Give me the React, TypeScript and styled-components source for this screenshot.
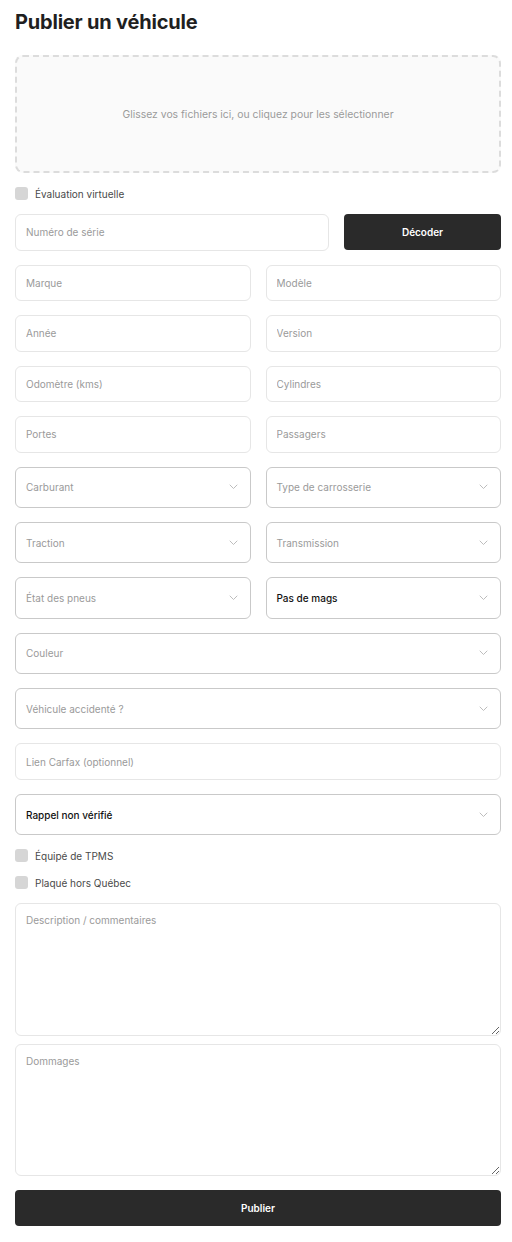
import * as React from "react"
import styled, { createGlobalStyle, css } from "styled-components"

const GlobalStyle = createGlobalStyle`
  html, body {
    margin: 0;
    padding: 0;
    background: #fff;
  }
  body {
    font-family: "Inter", "Liberation Sans", sans-serif;
    color: #1f1f1f;
  }
  * {
    box-sizing: border-box;
  }
`

const Page = styled.div`
  width: 512px;
  padding: 10px 11px 18px 15px;
  display: flex;
  flex-direction: column;
`

const Title = styled.h1`
  margin: 0 0 21px;
  font-size: 20px;
  line-height: 24px;
  font-weight: 700;
  letter-spacing: -0.2px;
  color: #1f1f1f;
`

const Form = styled.form`
  display: flex;
  flex-direction: column;
  gap: 14px;
`

const DropZone = styled.div`
  height: 118px;
  border: 2px dashed #dcdcdc;
  border-radius: 8px;
  background: #fafafa;
  display: flex;
  align-items: center;
  justify-content: center;
  font-size: 10.4px;
  color: #9a9a9a;
`

const CheckRow = styled.label`
  display: flex;
  align-items: center;
  gap: 7px;
  height: 13px;
  font-size: 10px;
  color: #4a4a4a;
`

const Box = styled.span`
  width: 13px;
  height: 13px;
  border-radius: 3px;
  background: #d6d6d6;
  flex: none;
`

const Row = styled.div<{ $cols?: string }>`
  display: grid;
  grid-template-columns: ${p => p.$cols || "1fr 1fr"};
  gap: 15px;
`

const field = css`
  width: 100%;
  border-radius: 6px;
  background: #fff;
  padding: 0 10px;
  font-family: "Inter", "Liberation Sans", sans-serif;
  font-size: 10px;
  outline: none;
`

const Input = styled.input`
  ${field};
  height: 36.5px;
  border: 1px solid #e6e6e6;
  color: #1f1f1f;
  &::placeholder {
    color: #9a9a9a;
  }
`

const SelectBox = styled.div<{ $filled?: boolean }>`
  ${field};
  height: 41.4px;
  border: 1px solid #c9c9c9;
  display: flex;
  align-items: center;
  justify-content: space-between;
  color: ${p => (p.$filled ? "#111" : "#9a9a9a")};
  font-weight: ${p => (p.$filled ? 500 : 400)};
  padding-right: 12px;
`

const TextAreas = styled.div`
  display: flex;
  flex-direction: column;
  gap: 8px;
`

const TextArea = styled.textarea`
  ${field};
  display: block;
  height: 132.5px;
  border: 1px solid #e6e6e6;
  padding: 10px 10px;
  resize: vertical;
  color: #1f1f1f;
  &::placeholder {
    color: #9a9a9a;
  }
`

const DarkButton = styled.button<{ $h?: number }>`
  height: ${p => p.$h || 36}px;
  border: 0;
  border-radius: 4px;
  background: #2a2a2a;
  color: #fff;
  font-family: "Inter", "Liberation Sans", sans-serif;
  font-size: 10px;
  font-weight: 600;
  cursor: pointer;
`

const Chevron = () => (
  <svg width="9" height="6" viewBox="0 0 9 6" fill="none">
    <path d="M1 1l3.5 3.5L8 1" stroke="#bdbdbd" strokeWidth="1" strokeLinecap="round" />
  </svg>
)

const Select = ({ label, filled }: { label: string; filled?: boolean }) => (
  <SelectBox $filled={filled}>
    <span>{label}</span>
    <Chevron />
  </SelectBox>
)

const Check = ({ label }: { label: string }) => (
  <CheckRow>
    <Box />
    {label}
  </CheckRow>
)

const textPairs = [
  ["Marque", "Modèle"],
  ["Année", "Version"],
  ["Odomètre (kms)", "Cylindres"],
  ["Portes", "Passagers"],
]

export default function App() {
  return (
    <>
      <GlobalStyle />
      <Page>
        <Title>Publier un véhicule</Title>
        <Form onSubmit={e => e.preventDefault()}>
          <DropZone>Glissez vos fichiers ici, ou cliquez pour les sélectionner</DropZone>
          <Check label="Évaluation virtuelle" />
          <Row $cols="314px 1fr">
            <Input placeholder="Numéro de série" />
            <DarkButton type="button">Décoder</DarkButton>
          </Row>
          {textPairs.map(([a, b]) => (
            <Row key={a}>
              <Input placeholder={a} />
              <Input placeholder={b} />
            </Row>
          ))}
          <Row>
            <Select label="Carburant" />
            <Select label="Type de carrosserie" />
          </Row>
          <Row>
            <Select label="Traction" />
            <Select label="Transmission" />
          </Row>
          <Row>
            <Select label="État des pneus" />
            <Select label="Pas de mags" filled />
          </Row>
          <Select label="Couleur" />
          <Select label="Véhicule accidenté ?" />
          <Input placeholder="Lien Carfax (optionnel)" />
          <Select label="Rappel non vérifié" filled />
          <Check label="Équipé de TPMS" />
          <Check label="Plaqué hors Québec" />
          <TextAreas>
            <TextArea placeholder="Description / commentaires" />
            <TextArea placeholder="Dommages" />
          </TextAreas>
          <DarkButton type="submit" $h={35.5}>
            Publier
          </DarkButton>
        </Form>
      </Page>
    </>
  )
}
